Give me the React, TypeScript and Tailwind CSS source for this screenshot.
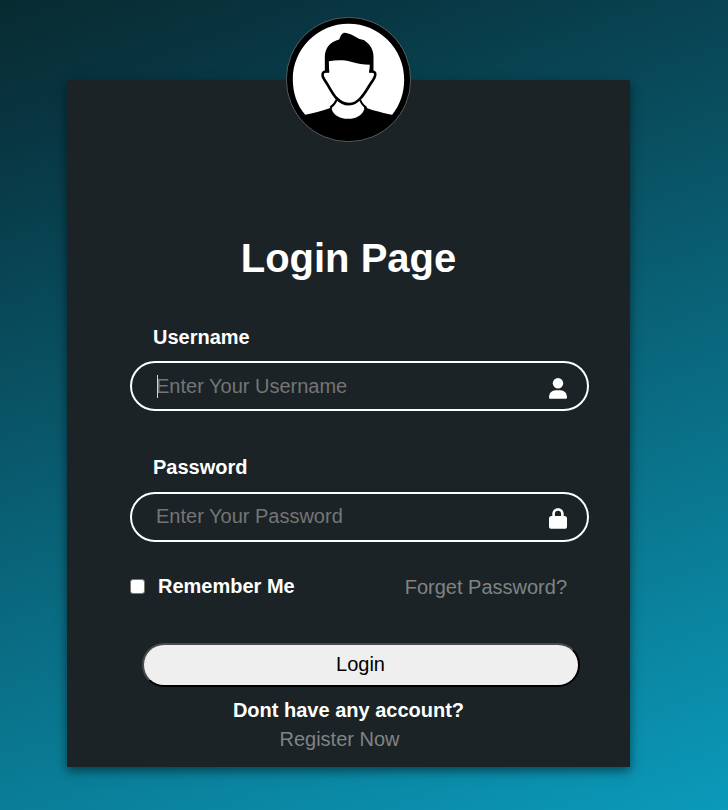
import React from 'react';

function Avatar() {
  return (
    <svg viewBox="23.5 27.5 375 375" className="h-[125px] w-[125px]" aria-label="User avatar">
      <circle cx="211" cy="215" r="186.5" fill="#000" stroke="#7d8282" strokeWidth="2" />
      <path
        d="M81 321C57 292 44 256 44 215C44 122 119 48 211 48S378 122 378 215C378 256 365 292 342 321C318 315 288 309 268 301C260 297 254 289 250 280L172 280C168 289 162 297 154 301C130 310 105 315 81 321Z"
        fill="#fff"
      />
      <path d="M175 276C166 287 161 295 161 304C165 322 187 333 210 333S253 322 258 304C258 295 255 287 246 276Z" fill="#fff" />
      <path d="M175 276Q170 290 156 299M246 276Q250 290 265 300" fill="none" stroke="#000" strokeWidth="6" />
      <path
        d="M153 191H146C135 190 131 196 134 207C137 214 141 220 145 225C154 240 162 256 173 269C184 281 196 289 212 289S239 281 249 269C261 256 269 240 279 225C283 220 287 214 290 207C294 196 290 190 280 191H273"
        fill="#fff"
        stroke="#000"
        strokeWidth="8"
        strokeLinejoin="round"
      />
      <path
        d="M140 193V145C141 119 158 101 183 95C187 88 187 80 197 75C207 75 218 79 229 85C240 93 248 94 258 97C277 110 286 126 286 147V193L273 194L275 171C256 170 238 168 218 162C196 155 173 157 152 160L153 193Z"
        fill="#000"
      />
    </svg>
  );
}

function UserIcon() {
  return (
    <svg viewBox="0 0 18 21" className="h-[21px] w-[18px]" fill="#fff">
      <circle cx="9" cy="5.3" r="5.2" />
      <path d="M0 19.6C0 15.2 2.7 12.2 6.8 12.2H11.2C15.3 12.2 18 15.2 18 19.6Q18 20.8 16.8 20.8H1.2Q0 20.8 0 19.6Z" />
    </svg>
  );
}

function LockIcon() {
  return (
    <svg viewBox="0 0 18 21" className="h-[21px] w-[18px]" fill="#fff">
      <path
        fillRule="evenodd"
        d="M3.3 8V5.9C3.3 2.5 5.7.2 9 .2S14.7 2.5 14.7 5.9V8H15.4Q18 8 18 10.6V18.2Q18 20.8 15.4 20.8H2.6Q0 20.8 0 18.2V10.6Q0 8 2.6 8ZM5.9 8H12.1V5.9C12.1 4 10.8 2.8 9 2.8S5.9 4 5.9 5.9Z"
      />
    </svg>
  );
}

type FieldProps = {
  label: string;
  placeholder: string;
  type: string;
  icon: React.ReactNode;
  focused?: boolean;
  className?: string;
  boxClassName?: string;
};

function Field({ label, placeholder, type, icon, focused, className = '', boxClassName = '' }: FieldProps) {
  return (
    <label className={`block ${className}`}>
      <span className="ml-[23px] block font-bold">{label}</span>
      <span
        className={`relative flex h-[50px] w-[459px] items-center rounded-[25px] border-2 border-white pl-6 pr-5 ${boxClassName}`}
      >
        {focused && <span className="absolute left-[25px] top-3 h-[23px] w-px bg-[#d5d6d6]" />}
        <input
          type={type}
          placeholder={placeholder}
          className="h-[23px] min-w-0 flex-1 bg-transparent text-white outline-none placeholder:text-[#757575]"
        />
        <span className="mt-[5px]">{icon}</span>
      </span>
    </label>
  );
}

export default function App() {
  return (
    <main className="flex h-[810px] w-full items-start overflow-hidden bg-[linear-gradient(160deg,#082b31_0%,#083642_13%,#0b9aba_100%)] pl-[67px] pt-[80px] font-['Liberation_Sans',Arial,sans-serif] text-[20px] leading-[23px] text-white">
      <section className="h-[687px] w-[563px] bg-[#1c2326] shadow-[0_4px_10px_rgba(0,0,0,0.5)]">
        <div className="-mt-[63px] flex justify-center">
          <Avatar />
        </div>
        <h1 className="mt-[93px] text-center text-[40px] font-bold leading-[46px]">Login Page</h1>
        <form className="ml-[63px] mt-[45px] w-[459px]">
          <Field
            label="Username"
            placeholder="Enter Your Username"
            type="text"
            icon={<UserIcon />}
            focused
            className="[&>span:first-child]:mb-3"
          />
          <Field
            label="Password"
            placeholder="Enter Your Password"
            type="password"
            icon={<LockIcon />}
            className="mt-[45px] [&>span:first-child]:mb-[13px]"
            boxClassName="pb-[2px]"
          />
          <div className="mt-[33px] flex items-start justify-between pr-[22px]">
            <label className="flex items-start font-bold">
              <input
                type="checkbox"
                className="mr-[13px] mt-1 h-[15px] w-[15px] appearance-none rounded-[3px] border border-[#767676] bg-white"
              />
              Remember Me
            </label>
            <a className="mt-px text-[#808384]">Forget Password?</a>
          </div>
          <button
            type="button"
            className="ml-3 mt-[44px] block h-[44px] w-[438px] rounded-[25px] border-2 border-[outset] border-t-[#4c4a4c] border-l-[#4c4a4c] border-b-black border-r-black bg-[#efefef] pb-px pr-px text-black"
          >
            Login
          </button>
        </form>
        <div className="mt-3 text-center">
          <p className="font-bold">Dont have any account?</p>
          <a className="mr-[18px] mt-[6px] block text-[#808384]">Register Now</a>
        </div>
      </section>
    </main>
  );
}
